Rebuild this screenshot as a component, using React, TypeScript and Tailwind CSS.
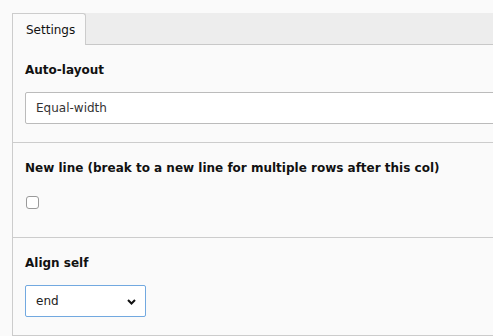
const font = { fontFamily: '"DejaVu Sans", Verdana, sans-serif' };

const Section = ({ label, children, bottom = 'pb-[18px]', gap = 'mt-[13px]', first = false }: any) => (
  <div className={`pt-4 ${bottom} pl-3 ${first ? '' : 'border-t border-[#cccccc]'}`}>
    <div className="h-[18px] leading-[18px] text-[12px] font-bold text-[#111]">{label}</div>
    <div className={gap}>{children}</div>
  </div>
);

export default function App() {
  return (
    <div className="w-[493px] h-[336px] overflow-hidden bg-[#fafafa] pt-[13px] pl-3" style={font}>
      <div className="w-[620px] border-l border-[#cccccc]">
        {/* Tabs */}
        <div className="flex bg-[#ededed]">
          <div className="w-[73px] h-[32px] flex items-center pl-[13px] bg-[#fafafa] border-t border-r border-[#cccccc] rounded-tr-[3px] text-[12px] text-[#111]">
            Settings
          </div>
          <div className="flex-1 h-[32px] border-b border-[#c8c8c8]" />
        </div>

        <Section label="Auto-layout" first>
          <div className="h-[32px] w-[560px] bg-white border border-[#bbbbbb] rounded-[2px] flex items-center pl-[10px] text-[12px] text-[#333]">
            Equal-width
          </div>
        </Section>

        <Section label="New line (break to a new line for multiple rows after this col)" gap="mt-[19px] pl-px" bottom="pb-[28px]">
          <div className="w-[13px] h-[13px] bg-white border border-[#9a9a9a] rounded-[3px]" />
        </Section>

        <Section label="Align self">
          <div className="h-[32px] w-[121px] bg-white border border-[#72a9e0] rounded-[2px] flex items-center justify-between pl-[10px] pr-[9px] text-[12px] text-[#222]">
            <span>end</span>
            <svg width="9" height="6" viewBox="0 0 9 6" className="mt-px">
              <polyline points="1,1 4.5,4.5 8,1" fill="none" stroke="#111" strokeWidth="2" />
            </svg>
          </div>
        </Section>
        <div className="border-t border-[#cccccc]" />
      </div>
    </div>
  );
}
